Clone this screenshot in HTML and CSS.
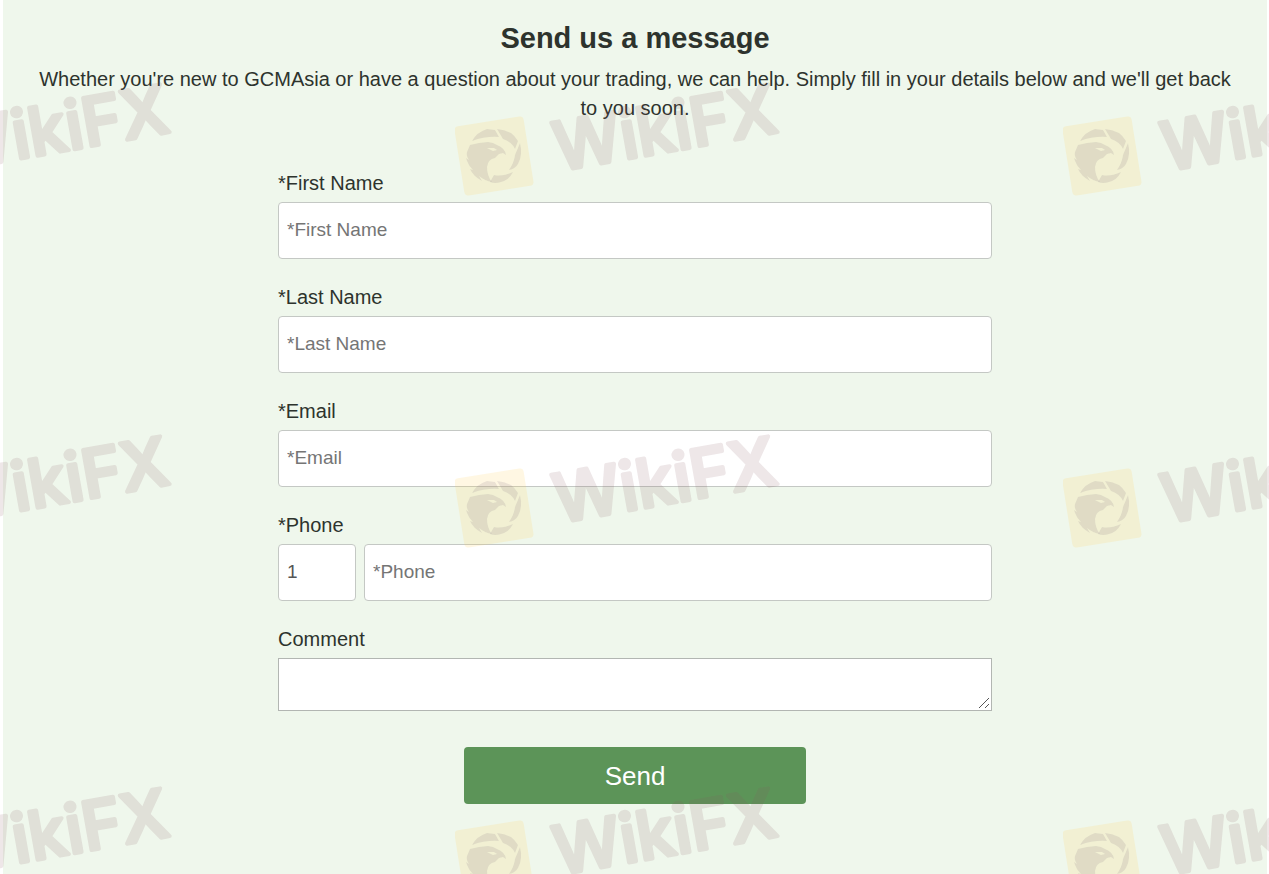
FILE: index.html
```html
<!DOCTYPE html>
<html lang="en">
<head>
<meta charset="utf-8">
<title>Send us a message</title>
<link rel="stylesheet" href="styles.css">
</head>
<body>
<main class="contact">
  <h1 class="title">Send us a message</h1>
  <p class="intro">Whether you're new to GCMAsia or have a question about your trading, we can help. Simply fill in your details below and we'll get back to you soon.</p>
  <form class="form">
    <div class="field">
      <label for="first">*First Name</label>
      <input class="control" id="first" type="text" placeholder="*First Name">
    </div>
    <div class="field">
      <label for="last">*Last Name</label>
      <input class="control" id="last" type="text" placeholder="*Last Name">
    </div>
    <div class="field">
      <label for="email">*Email</label>
      <input class="control" id="email" type="email" placeholder="*Email">
    </div>
    <div class="field">
      <label for="phone">*Phone</label>
      <div class="phone">
        <input class="control code" type="text" value="1" aria-label="Country code">
        <input class="control" id="phone" type="tel" placeholder="*Phone">
      </div>
    </div>
    <div class="field">
      <label for="comment">Comment</label>
      <div class="comment-box">
        <textarea class="comment" id="comment"></textarea>
        <svg class="grip" width="12" height="12" viewBox="0 0 12 12" aria-hidden="true"><path d="M1 11L11 1M7 11L11 7"/></svg>
      </div>
    </div>
    <button class="send" type="submit">Send</button>
  </form>
</main>
<svg class="watermark" aria-hidden="true">
  <defs>
    <pattern id="mark" x="-153" y="67" width="608" height="352" patternUnits="userSpaceOnUse">
      <g transform="translate(39 89)">
        <rect class="badge" x="-35" y="-35" width="70" height="70" rx="4" transform="rotate(-9)"/>
        <g class="ink">
          <path d="M-22-15Q-17-24-7-27L1-26L5-19Q-8-20-22-15Z"/>
          <path d="M3-27Q18-26 24-15L21-7Q18-14 9-17Z"/>
          <path d="M26-13Q29-1 24 8Q21 13 15 14Q20 7 21-1Z"/>
          <path d="M19 16Q15 24 7 26Q1 28-4 26L0 19Q8 21 19 16Z"/>
          <path fill-rule="evenodd" d="M-27-4L-24-11L-15-13L-6-14L-1-13L3-11Q11-8 12-1L9-3L5-2L1 2Q-6 3-7 11Q-7 20-2 26Q-9 25-15 20L-12 25Q-21 20-24 13L-21 14Q-26 9-28 2L-25 4Q-28 0-27-4ZM-7-8L-1-5L3-6L0-8Z"/>
        </g>
      </g>
      <text class="brand" transform="translate(103 104) rotate(-10)">WikiFX</text>
    </pattern>
  </defs>
  <rect width="100%" height="100%" fill="url(#mark)"/>
</svg>
</body>
</html>
```
FILE: styles.css
```css
* {
  box-sizing: border-box;
}

body {
  margin: 0;
  padding: 0 2px 0 3px;
  background: #fff;
  color: #2d332d;
  font-family: "Liberation Sans", Arial, sans-serif;
  font-size: 20px;
  position: relative;
}

.contact {
  min-height: 100vh;
  padding: 20px 32px 69px;
  background: #eff7ec;
}

.title {
  margin: 0;
  font-size: 29px;
  line-height: 36px;
  text-align: center;
}

.intro {
  margin: 9px 0 0;
  line-height: 29px;
  text-align: center;
}

.form {
  display: flex;
  flex-direction: column;
  gap: 25px;
  max-width: 714px;
  margin: 47px auto 0;
}

.field {
  display: flex;
  flex-direction: column;
  gap: 6px;
}

.field label {
  line-height: 26px;
}

.control {
  width: 100%;
  height: 57px;
  padding: 0 8px 1px;
  border: 1px solid #c4c8c4;
  border-radius: 4px;
  background: #fff;
  color: #555;
  font-family: inherit;
  font-size: 19px;
}

.control::placeholder {
  color: #757575;
}

.phone {
  display: flex;
  gap: 8px;
}

.code {
  flex: 0 0 78px;
}

.comment-box {
  position: relative;
}

.comment {
  display: block;
  width: 100%;
  height: 53px;
  border: 1px solid #b2b6b2;
  background: #fff;
  font-family: inherit;
  font-size: 19px;
  resize: vertical;
}

.comment::-webkit-resizer {
  background: transparent;
}

.grip {
  position: absolute;
  right: 2px;
  bottom: 2px;
  fill: none;
  stroke: #555;
  pointer-events: none;
}

.send {
  align-self: center;
  width: 48%;
  height: 57px;
  margin-top: 11px;
  padding: 2px 0 0;
  border: 0;
  border-radius: 4px;
  background: #5c9458;
  color: #fff;
  font-family: inherit;
  font-size: 26px;
}

.watermark {
  position: absolute;
  inset: 0;
  width: 100%;
  height: 100%;
  pointer-events: none;
}

.badge {
  fill: #ffd050;
  fill-opacity: 0.16;
}

.ink {
  fill: #786478;
  fill-opacity: 0.15;
}

.brand {
  font-family: Inter, sans-serif;
  font-size: 67px;
  font-weight: 500;
  fill: #82505a;
  stroke: #82505a;
  stroke-width: 4;
  stroke-linejoin: round;
  opacity: 0.14;
}
```
